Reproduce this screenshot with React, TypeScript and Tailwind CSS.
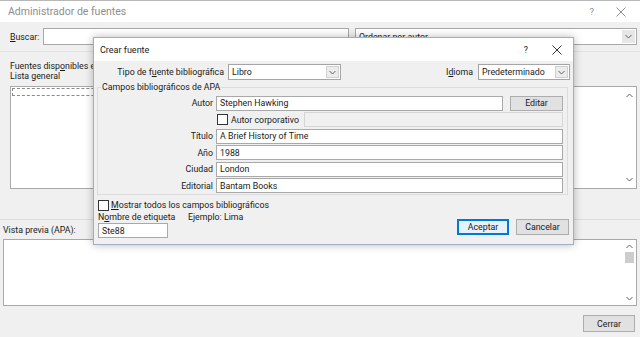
const Chevron = ({ up = false }: { up?: boolean }) => (
  <svg width="7" height="5" viewBox="0 0 7 5" className={up ? "rotate-180" : ""}>
    <path d="M0.5 1 L3.5 4 L6.5 1" fill="none" stroke="#606060" strokeWidth="1" />
  </svg>
);

const CloseX = ({ color = "#333" }: { color?: string }) => (
  <svg width="10" height="10" viewBox="0 0 10 10">
    <path d="M0.5 0.5 L9.5 9.5 M9.5 0.5 L0.5 9.5" stroke={color} strokeWidth="1" />
  </svg>
);

const Select = ({ value, w }: { value: string; w: string }) => (
  <div className={`flex h-[16px] items-center border border-[#a5a5a5] bg-white ${w}`}>
    <span className="flex-1 pl-[3px] leading-[14px]">{value}</span>
    <span className="m-[1px] flex h-[12px] w-[13px] items-center justify-center border border-[#d0d0d0] bg-[#ececec]">
      <Chevron />
    </span>
  </div>
);

const Box = () => <span className="inline-block h-[11px] w-[11px] border border-[#333] bg-white" />;

const Field = ({ label, value }: { label: string; value: string }) => (
  <div className="flex h-[16.5px] items-center">
    <span className="w-[115px] text-right">{label}</span>
    <div className="ml-[3px] flex h-[15px] flex-1 items-center border border-[#a9a9a9] bg-white pl-[3px]">{value}</div>
  </div>
);

export default function App() {
  return (
    <div className="relative h-[337px] w-[640px] overflow-hidden whitespace-nowrap bg-[#f0f0f0] font-['Roboto',sans-serif] text-[8.8px] leading-[12px] text-[#1a1a1a]">
      {/* fondo: Administrador de fuentes */}
      <div className="flex h-[22px] items-center border-t border-[#b8b8b8] bg-white pl-[8px] pr-[14px] text-[#8e8e8e]">
        <span className="text-[10.5px]">Administrador de fuentes</span>
        <span className="ml-auto mr-[22px]">?</span>
        <CloseX color="#8e8e8e" />
      </div>
      <div className="mt-[6px] flex h-[17px] items-center pl-[10px] pr-[3px]">
        <span className="w-[33px]"><u>B</u>uscar:</span>
        <div className="h-[17px] w-[306px] border border-[#a9a9a9] bg-white" />
        <div className="ml-[6px] flex h-[17px] flex-1 items-center border border-[#a9a9a9] bg-white pl-[3px]">
          <span className="flex-1">Ordenar por autor</span>
          <span className="m-[1px] flex h-[13px] w-[13px] items-center justify-center bg-[#e6e6e6]"><Chevron /></span>
        </div>
      </div>
      <div className="mt-[6px] h-px bg-[#e2e2e2]" />
      <div className="mt-[9px] pl-[10px] leading-[10px]">Fuentes disp<u>o</u>nibles en:</div>
      <div className="pl-[10px] leading-[10px]">Lista general</div>
      <div className="mt-[5px] flex h-[103px] gap-[20px] pl-[10px] pr-[3px]">
        <div className="w-[250px] border border-[#a9a9a9] bg-white p-[1px]">
          <div className="h-[8px] border border-dashed border-[#8a8a8a]" />
        </div>
        <div className="flex flex-1 border border-[#a9a9a9] bg-white">
          <div className="flex-1" />
          <div className="flex w-[14px] flex-col items-center justify-between py-[6px]">
            <Chevron up />
            <Chevron />
          </div>
        </div>
      </div>
      <div className="mt-[30px] h-px bg-[#dcdcdc]" />
      <div className="mt-[5px] pl-[3px] leading-[10px]">Vista previa (APA):</div>
      <div className="ml-[3px] mr-[3px] mt-[4px] flex h-[67px] border border-[#a9a9a9] bg-white">
        <div className="flex-1" />
        <div className="flex w-[14px] flex-col items-center py-[4px]">
          <Chevron up />
          <div className="mt-[3px] h-[11px] w-[9px] bg-[#cdcdcd]" />
          <div className="mt-auto"><Chevron /></div>
        </div>
      </div>
      <div className="mt-[9px] flex justify-end pr-[5px]">
        <div className="flex h-[17px] w-[52px] items-center justify-center border border-[#adadad] bg-[#e1e1e1]">Cerrar</div>
      </div>

      {/* diálogo: Crear fuente */}
      <div className="absolute left-[93px] top-[37px] flex h-[208px] w-[481px] flex-col border border-[#a3acc6] bg-[#f0f0f0] shadow-[0_0_8px_rgba(0,0,0,0.28)]">
        <div className="flex h-[23px] items-center bg-white pl-[6px] pr-[11px]">
          <span className="text-[9px]">Crear fuente</span>
          <span className="ml-auto mr-[24px]">?</span>
          <CloseX />
        </div>
        <div className="flex flex-1 flex-col">
          <div className="mt-[3px] flex h-[16px] items-center pr-[3px]">
            <span className="w-[130px] text-right">Tipo de f<u>u</u>ente bibliográfica</span>
            <div className="ml-[4px]"><Select value="Libro" w="w-[113px]" /></div>
            <span className="ml-auto mr-[5px]">I<u>d</u>ioma</span>
            <Select value="Predeterminado" w="w-[92px]" />
          </div>
          <fieldset className="mx-[3px] mr-[5px] mt-[1px] border border-[#dcdcdc] pr-[4px] pt-[2px]">
            <legend className="ml-[3px] px-[1px] leading-[12px]">Campos bibliográficos de APA</legend>
            <div className="flex h-[16.5px] items-center">
              <span className="w-[115px] text-right">Autor</span>
              <div className="ml-[3px] flex h-[15px] w-[287px] items-center border border-[#a9a9a9] bg-white pl-[3px]">Stephen Hawking</div>
              <div className="ml-[7px] flex h-[15px] flex-1 items-center justify-center border border-[#adadad] bg-[#e1e1e1]">Editar</div>
            </div>
            <div className="flex h-[16.5px] items-center">
              <span className="ml-[119px] flex"><Box /></span>
              <span className="ml-[3px]">Autor corporativo</span>
              <div className="ml-auto h-[15px] w-[259px] border border-[#d6d6d6] bg-[#f0f0f0]" />
            </div>
            <Field label="Título" value="A Brief History of Time" />
            <Field label="Año" value="1988" />
            <Field label="Ciudad" value="London" />
            <Field label="Editorial" value="Bantam Books" />
          </fieldset>
          <div className="flex items-end px-[4px]">
            <div className="flex flex-col">
              <div className="mt-[4px] flex h-[12px] items-center">
                <Box />
                <span className="ml-[2px]"><u>M</u>ostrar todos los campos bibliográficos</span>
              </div>
              <div className="mt-[1px] flex leading-[10px]">
                <span className="w-[90px]">N<u>o</u>mbre de etiqueta</span>
                <span>Ejemplo: Lima</span>
              </div>
              <div className="mt-[1px] flex h-[15px] w-[70px] items-center border border-[#a9a9a9] bg-white pl-[3px]">Ste88</div>
            </div>
            <div className="mb-[3px] ml-auto flex gap-[7px]">
              <div className="flex h-[16px] w-[52px] items-center justify-center border-2 border-[#0078d7] bg-[#e5f1fb]">Aceptar</div>
              <div className="flex h-[16px] w-[53px] items-center justify-center border border-[#adadad] bg-[#e1e1e1]">Cancelar</div>
            </div>
          </div>
        </div>
      </div>
    </div>
  );
}
